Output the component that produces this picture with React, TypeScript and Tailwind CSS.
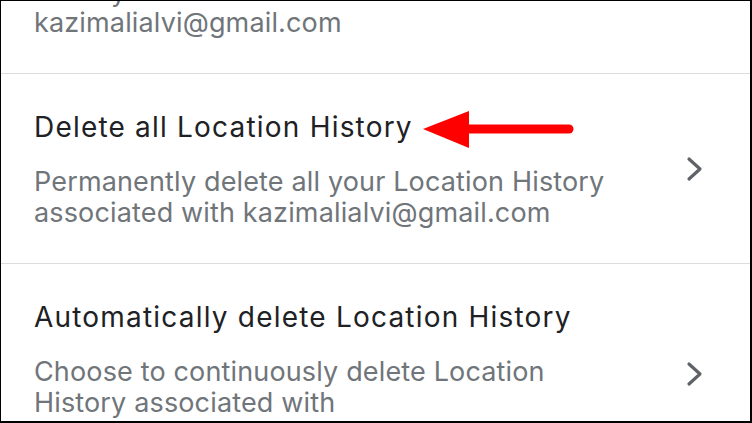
import React from 'react';

const Chevron = () => (
  <svg width="18" height="26" viewBox="0 0 18 26" className="shrink-0 -mt-[3px]">
    <polyline points="3,3 14,13 3,23" fill="none" stroke="#5f6368" strokeWidth="3.2" strokeLinecap="round" strokeLinejoin="round" />
  </svg>
);

const Row = ({ title, lines }: { title: string; lines: string[] }) => (
  <div className="border-t border-[#dadce0] flex items-center pl-[33px] pr-[46px] pt-[38px] pb-[35px]">
    <div className="flex-1">
      <p className="text-[28px] leading-[31px] tracking-[1.2px] text-[#202124] whitespace-nowrap">{title}</p>
      <div className="mt-[23px]">
        {lines.map((l, i) => (
          <p key={i} className="text-[27px] leading-[31px] tracking-[0.15px] text-[#70757a] whitespace-nowrap">{l}</p>
        ))}
      </div>
    </div>
    <Chevron />
  </div>
);

export default function App() {
  return (
    <div
      className="relative w-[752px] h-[423px] overflow-hidden bg-white border-t border-l border-r-2 border-b-2 border-black"
      style={{ fontFamily: 'Inter, "Noto Sans", sans-serif' }}
    >
      <div className="pl-[33px] -mt-[25px] pb-[35px]">
        <p className="text-[27px] leading-[31px] tracking-[0.15px] text-[#70757a]">History associated with</p>
        <p className="text-[27px] leading-[31px] tracking-[0.15px] text-[#70757a]">kazimalialvi@gmail.com</p>
      </div>

      <Row
        title="Delete all Location History"
        lines={['Permanently delete all your Location History', 'associated with kazimalialvi@gmail.com']}
      />
      <Row
        title="Automatically delete Location History"
        lines={['Choose to continuously delete Location', 'History associated with', 'kazimalialvi@gmail.com']}
      />

      {/* red annotation arrow */}
      <svg className="absolute left-[419px] top-[107px]" width="160" height="44" viewBox="0 0 160 44">
        <polygon points="3,21 49,3 49,40" fill="#ff0000" />
        <line x1="46" y1="21" x2="149" y2="21" stroke="#ff0000" strokeWidth="9" strokeLinecap="round" />
      </svg>
    </div>
  );
}
